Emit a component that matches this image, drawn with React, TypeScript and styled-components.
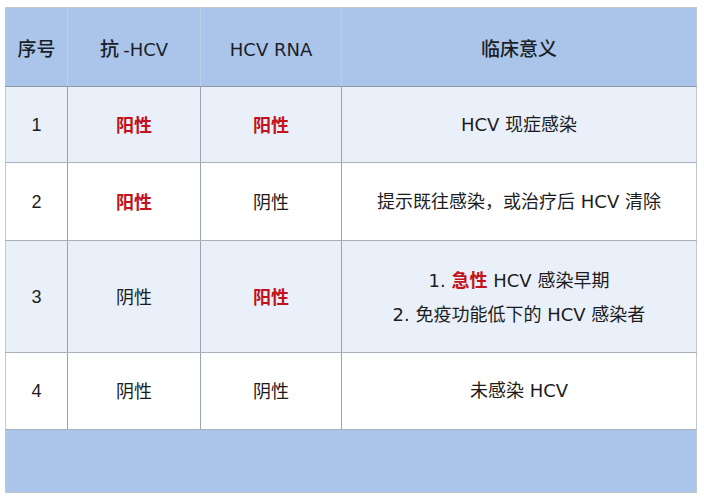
import React from "react";
import styled, { createGlobalStyle } from "styled-components";

const Global = createGlobalStyle`
  html, body { margin: 0; padding: 0; background: #ffffff; }
  body { font-family: "DejaVu Sans", "Noto Sans CJK SC", sans-serif; color: #1c1c1c; }
`;

const Page = styled.div`
  width: 704px;
  height: 500px;
  padding: 7px 7px 0 5px;
  box-sizing: border-box;
`;

const Table = styled.table`
  width: 692px;
  border-collapse: collapse;
  table-layout: fixed;
  border: 1px solid #c3c8cf;
`;

const HeadCell = styled.th`
  height: 78px;
  padding: 0;
  background: #aac5e9;
  font-family: "Noto Sans CJK SC", sans-serif;
  font-size: 19px;
  font-weight: 500;
  color: #1a1f2a;
  text-align: center;
  vertical-align: middle;
  border-left: 1px solid #bccde6;
  border-bottom: 1px solid #8f9aa8;
  &:first-child { border-left: none; }
`;

const Latin = styled.span`
  font-family: "DejaVu Sans", sans-serif;
  font-weight: 400;
  font-size: 18px;
`;

const Row = styled.tr<{ $shade: boolean; $h: number }>`
  height: ${(p) => p.$h}px;
  background: ${(p) => (p.$shade ? "#eaf0f9" : "#ffffff")};
`;

const Cell = styled.td`
  padding: 0;
  text-align: center;
  vertical-align: middle;
  font-size: 18px;
  line-height: 34px;
  color: #1c1c1c;
  border-left: 1px solid #9aa3ae;
  border-bottom: 1px solid #a8b0ba;
  &:first-child { border-left: none; font-family: "Liberation Sans", sans-serif; }
`;

const Pos = styled.span`
  font-family: "Noto Sans CJK SC", sans-serif;
  color: #c2121c;
  font-weight: 700;
`;

const Neg = styled.span`
  font-family: "Noto Sans CJK SC", sans-serif;
`;

const FootCell = styled.td`
  height: 62px;
  padding: 0;
  background: #aac5e9;
`;

const Line = styled.div``;

const rows = [
  { n: "1", a: true, r: true, m: <Line>HCV 现症感染</Line>, h: 76, shade: true },
  { n: "2", a: true, r: false, m: <Line>提示既往感染，或治疗后 HCV 清除</Line>, h: 78, shade: false },
  {
    n: "3",
    a: false,
    r: true,
    m: (
      <>
        <Line>
          1. <Pos>急性</Pos> HCV 感染早期
        </Line>
        <Line>2. 免疫功能低下的 HCV 感染者</Line>
      </>
    ),
    h: 112,
    shade: true,
  },
  { n: "4", a: false, r: false, m: <Line>未感染 HCV</Line>, h: 77, shade: false },
];

const Result = ({ pos }: { pos: boolean }) => (pos ? <Pos>阳性</Pos> : <Neg>阴性</Neg>);

export default function App() {
  return (
    <>
      <Global />
      <Page>
        <Table>
          <colgroup>
            <col style={{ width: 62 }} />
            <col style={{ width: 133 }} />
            <col style={{ width: 141 }} />
            <col />
          </colgroup>
          <thead>
            <tr>
              <HeadCell>序号</HeadCell>
              <HeadCell>
                抗 <Latin>-HCV</Latin>
              </HeadCell>
              <HeadCell>
                <Latin>HCV RNA</Latin>
              </HeadCell>
              <HeadCell>临床意义</HeadCell>
            </tr>
          </thead>
          <tbody>
            {rows.map((r) => (
              <Row key={r.n} $shade={r.shade} $h={r.h}>
                <Cell>{r.n}</Cell>
                <Cell>
                  <Result pos={r.a} />
                </Cell>
                <Cell>
                  <Result pos={r.r} />
                </Cell>
                <Cell>{r.m}</Cell>
              </Row>
            ))}
            <tr>
              <FootCell colSpan={4} />
            </tr>
          </tbody>
        </Table>
      </Page>
    </>
  );
}
